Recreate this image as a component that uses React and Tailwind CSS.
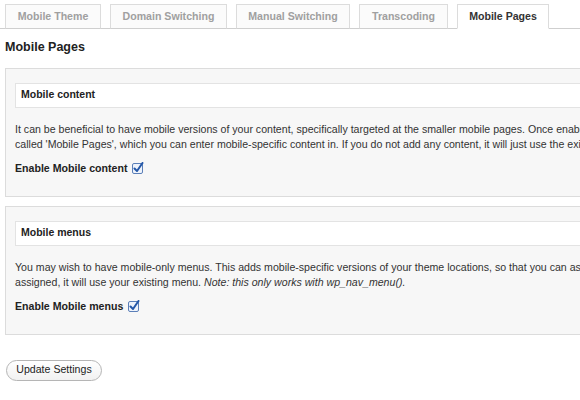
import React from 'react';

const tabs = [
  { label: 'Mobile Theme', w: 'w-[96px]' },
  { label: 'Domain Switching', w: 'w-[117px]' },
  { label: 'Manual Switching', w: 'w-[114px]' },
  { label: 'Transcoding', w: 'w-[89px]' },
  { label: 'Mobile Pages', w: 'w-[92px]', active: true },
];

function Check() {
  return (
    <svg width="12" height="12" viewBox="0 0 12 12" className="inline-block ml-[5px] -mt-[2px] align-middle">
      <rect x="0.5" y="1.5" width="10" height="10" rx="1.5" fill="#eef3fb" stroke="#5b7fb8" />
      <path d="M2.5 6.5 L5 9 L10.5 1" fill="none" stroke="#2457a8" strokeWidth="2" strokeLinecap="round" strokeLinejoin="round" />
    </svg>
  );
}

function Panel({ title, children, label }) {
  return (
    <div className="ml-[5px] mr-[-10px] border border-[#dcdcdc] bg-[#f7f7f7] pt-[14px] pb-[19px] pl-[9px]">
      <div className="border border-[#e3e3e3] bg-white h-[25px] flex items-center pl-[5px] font-bold text-[10.5px] text-[#222]">
        {title}
      </div>
      <div className="mt-[14px] leading-[15px] text-[10.6px] text-[#333] whitespace-nowrap">{children}</div>
      <div className="mt-[9px] font-bold text-[10.6px] text-[#222]">
        {label}
        <Check />
      </div>
    </div>
  );
}

export default function App() {
  return (
    <div className="w-[580px] h-[400px] overflow-hidden bg-white text-[11px] font-['Liberation_Sans',Arial,sans-serif]">
      <div className="flex items-end gap-[9px] pl-[5px] pt-[4px] border-b border-[#cfcfcf] h-[29px]">
        {tabs.map((t) => (
          <div
            key={t.label}
            className={`${t.w} h-[25px] -mb-px flex items-center justify-center font-bold text-[10.6px] border border-[#dcdcdc] ${
              t.active ? 'bg-white text-[#333] border-b-white border-[#cfcfcf]' : 'bg-[#fbfbfb] text-[#a0a0a0] border-b-[#cfcfcf]'
            }`}
          >
            {t.label}
          </div>
        ))}
      </div>

      <h2 className="ml-[5px] mt-[9px] mb-[11px] text-[12.5px] font-bold text-[#222]">Mobile Pages</h2>

      <Panel title="Mobile content" label="Enable Mobile content">
        It can be beneficial to have mobile versions of your content, specifically targeted at the smaller mobile pages. Once enabled, you will see a new box
        <br />
        called 'Mobile Pages', which you can enter mobile-specific content in. If you do not add any content, it will just use the existing content.
      </Panel>

      <div className="h-[9px]" />

      <Panel title="Mobile menus" label="Enable Mobile menus">
        You may wish to have mobile-only menus. This adds mobile-specific versions of your theme locations, so that you can assign menus to them. If none are
        <br />
        assigned, it will use your existing menu. <i>Note: this only works with wp_nav_menu().</i>
      </Panel>

      <button className="ml-[6px] mt-[25px] h-[21px] w-[96px] rounded-full border border-[#b5b5b5] bg-gradient-to-b from-white to-[#f1f1f1] text-[#222] text-[10.6px]">
        Update Settings
      </button>
    </div>
  );
}
